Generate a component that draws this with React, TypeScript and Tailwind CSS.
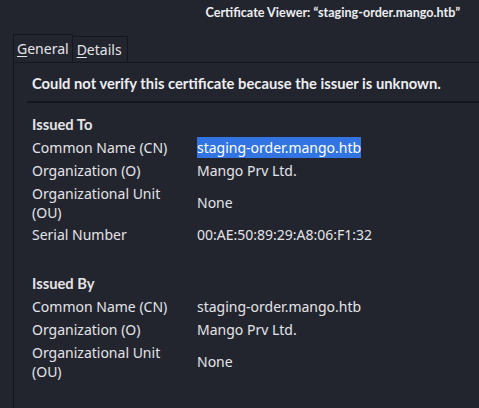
import React from "react";

const Row = ({ label, value, sel, tall }: { label: React.ReactNode; value: string; sel?: boolean; tall?: boolean }) => (
  <div className={`flex items-center ${tall ? "min-h-[41px]" : "min-h-[23px]"}`}>
    <div className="w-[165px] shrink-0 leading-[19px]">{label}</div>
    <div className="leading-[19px]">
      {sel ? <span className="bg-[#3174e2] text-white py-[1px]">{value}</span> : value}
    </div>
  </div>
);

const bold = { fontFamily: 'Lato, "Noto Sans", sans-serif' };

export default function App() {
  return (
    <div
      className="w-[479px] h-[408px] bg-[#23252e] text-[#e3e4e8] overflow-hidden relative"
      style={{ fontFamily: '"Noto Sans", "Open Sans", sans-serif' }}
    >
      <div className="h-[28px] flex items-center justify-end pr-[19px] pb-[2px] text-[12.6px] font-bold text-[#eceef2]" style={bold}>
        Certificate Viewer: “staging-order.mango.htb”
      </div>
      <div className="flex items-end pl-[13px] h-[34px]">
        <div className="h-[28px] border border-b-0 border-[#16171c] px-[3px] flex items-center text-[14px] bg-[#23252e]">
          <span><span className="underline underline-offset-2">G</span>eneral</span>
        </div>
        <div className="h-[26px] border border-l-0 border-b-0 border-[#16171c] pl-[4px] pr-[5px] flex items-center text-[14px]">
          <span><span className="underline underline-offset-2">D</span>etails</span>
        </div>
      </div>
      <div className="ml-[13px] border-l border-t border-[#16171c] h-[400px] pl-[13px]">
        <div className="h-[40px] flex items-center pl-[5px] pt-[3px] text-[14.75px] font-bold text-[#eceef2] border-b-2 border-[#16171c]" style={bold}>
          Could not verify this certificate because the issuer is unknown.
        </div>
        <div className="pl-[5px] text-[14px]">
          <div className="font-bold mt-[10px] h-[22px] flex items-center text-[14.75px]" style={bold}>Issued To</div>
          <div className="h-px" />
          <Row label="Common Name (CN)" value="staging-order.mango.htb" sel />
          <Row label="Organization (O)" value="Mango Prv Ltd." />
          <Row tall label={<>Organizational Unit<br />(OU)</>} value="None" />
          <Row label="Serial Number" value="00:AE:50:89:29:A8:06:F1:32" />
          <div className="font-bold mt-[26px] h-[23px] flex items-center text-[14.75px]" style={bold}>Issued By</div>
          <Row label="Common Name (CN)" value="staging-order.mango.htb" />
          <Row label="Organization (O)" value="Mango Prv Ltd." />
          <Row tall label={<>Organizational Unit<br />(OU)</>} value="None" />
        </div>
      </div>
    </div>
  );
}
